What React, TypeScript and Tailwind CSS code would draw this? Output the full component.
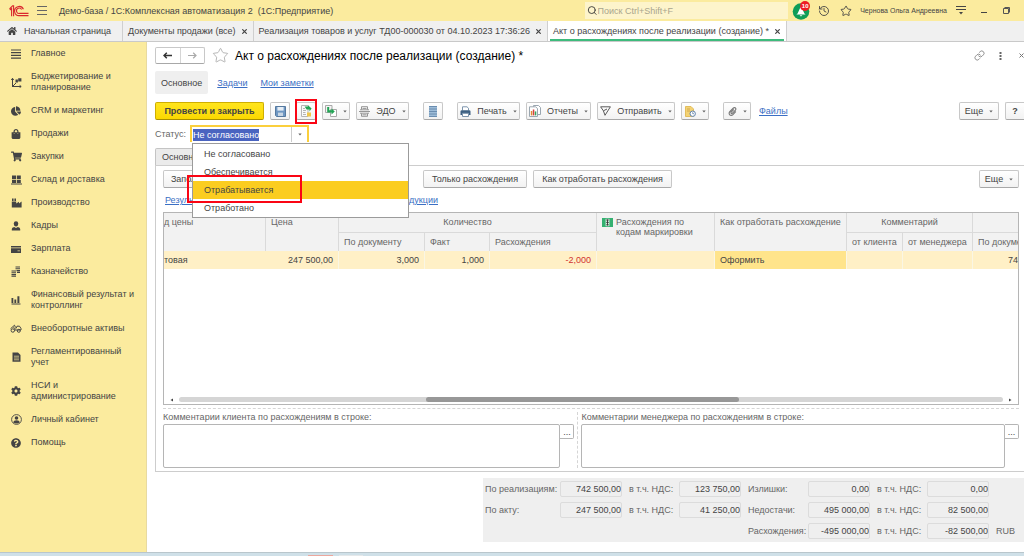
import { useEffect, useRef, type ReactNode } from "react";
import clsx from "clsx";
import {
  FaChartPie,
  FaCog,
  FaHome,
  FaPaperclip,
  FaQuestionCircle,
  FaShoppingBag,
  FaShoppingCart,
} from "react-icons/fa";
import { History, Link, Search, Star } from "lucide-react";

const tabs = [
  { name: "Документы продажи (все)", active: false },
  { name: "Реализация товаров и услуг ТД00-000030 от 04.10.2023 17:36:26", active: false },
  { name: "Акт о расхождениях после реализации (создание) *", active: true },
];

const sections: { name: string; icon: ReactNode }[] = [
  { name: "Главное", icon: <LinesIcon /> },
  { name: "Бюджетирование и планирование", icon: <PlanIcon /> },
  { name: "CRM и маркетинг", icon: <FaChartPie size={10} /> },
  { name: "Продажи", icon: <FaShoppingBag size={10} /> },
  { name: "Закупки", icon: <FaShoppingCart size={11} /> },
  { name: "Склад и доставка", icon: <StoreIcon /> },
  { name: "Производство", icon: <FactoryIcon /> },
  { name: "Кадры", icon: <PersonIcon /> },
  { name: "Зарплата", icon: <CardIcon /> },
  { name: "Казначейство", icon: <CoinsIcon /> },
  { name: "Финансовый результат и контроллинг", icon: <BarsIcon /> },
  { name: "Внеоборотные активы", icon: <TruckIcon /> },
  { name: "Регламентированный учет", icon: <ReportIcon /> },
  { name: "НСИ и администрирование", icon: <FaCog size={10} /> },
  { name: "Личный кабинет", icon: <AccountIcon /> },
  { name: "Помощь", icon: <FaQuestionCircle size={10} /> },
];

const statuses = ["Не согласовано", "Обеспечивается", "Отрабатывается", "Отработано"];

const totals = [
  [
    { label: "По реализациям:", value: "742 500,00" },
    { label: "в т.ч. НДС:", value: "123 750,00" },
    { label: "Излишки:", value: "0,00" },
    { label: "в т.ч. НДС:", value: "0,00" },
  ],
  [
    { label: "По акту:", value: "247 500,00" },
    { label: "в т.ч. НДС:", value: "41 250,00" },
    { label: "Недостачи:", value: "495 000,00" },
    { label: "в т.ч. НДС:", value: "82 500,00" },
  ],
  [
    null,
    null,
    { label: "Расхождения:", value: "-495 000,00" },
    { label: "в т.ч. НДС:", value: "-82 500,00" },
  ],
];

/* ---------- icons ---------- */

function Logo() {
  return (
    <svg width="20" height="12" viewBox="0 0 20 12" fill="none" stroke="#d9272e" strokeWidth="1.1">
      <path d="M0.5 3.8 L3.6 0.8 H4.6 V11.2 M2.6 11.2 V3.6 L0.8 5" />
      <path d="M14.4 4.2 A4.6 4.6 0 1 0 10.8 10.6 H19.5" />
      <path d="M12.6 4.6 A2.7 2.7 0 1 0 10.8 8.4 H19.5" />
    </svg>
  );
}

function LinesIcon() {
  return (
    <svg width="10" height="10" viewBox="0 0 10 10" stroke="currentColor" strokeWidth="1.2">
      <path d="M0 1H10M0 3.7H10M0 6.4H10M0 9.1H10" />
    </svg>
  );
}

function PlanIcon() {
  return (
    <svg width="11" height="11" viewBox="0 0 11 11" fill="none" stroke="currentColor">
      <path d="M1.5 10V1.5M0.3 3L1.5 1.3L2.7 3M1.5 9.5H10M8.6 8.3L10.2 9.5L8.6 10.7M1.5 9.5L5 6" />
      <path d="M4.5 2.6h2.4v3H4.5zM7.2 1.2h3.2v3.4H7.2z" fill="currentColor" stroke="none" />
    </svg>
  );
}

function StoreIcon() {
  return (
    <svg width="11" height="10" viewBox="0 0 11 10" fill="currentColor">
      <path d="M1 0.5h4v3.8H1zM5.8 0.5h4v3.8h-4zM1 5h4v3H1zM5.8 5h4v3h-4zM0 8.4h11v1.2H0z" />
    </svg>
  );
}

function FactoryIcon() {
  return (
    <svg width="11" height="10" viewBox="0 0 11 10" fill="currentColor">
      <path d="M1 0.5h1.6V3H1zM3.4 0.5H5V3H3.4zM0.8 3.6h4.4v2L8 3.8v1.6l2.6-1.8V9.6H0.8z" />
    </svg>
  );
}

function PersonIcon() {
  return (
    <svg width="10" height="10" viewBox="0 0 10 10" fill="currentColor">
      <path d="M2.8 2.4Q2.8 0.3 5 0.3T7.2 2.4Q7.2 5.4 5 5.4T2.8 2.4Z" />
      <path d="M0.8 9.6V8Q0.8 6.4 3.2 6L5 7L6.8 6Q9.2 6.4 9.2 8V9.6Z" />
    </svg>
  );
}

function CardIcon() {
  return (
    <svg width="10" height="8" viewBox="0 0 10 8" fill="currentColor">
      <path d="M0 1h10v1.4H0zM0 3.2h10V8H0z" />
      <path d="M6.5 5.8h2.4" stroke="#fbeb9e" strokeWidth="0.7" />
    </svg>
  );
}

function CoinsIcon() {
  return (
    <svg width="10" height="11" viewBox="0 0 10 11" fill="none" stroke="currentColor" strokeWidth="1.1">
      <path d="M4.5 1h4.5M4.5 2.8h4.5M5.5 4.6h3.5M6 6.4h3M0.5 5h4.5M0.5 6.8h4.5M0.5 8.6h4.5M0.5 10.3h4.5" />
    </svg>
  );
}

function BarsIcon() {
  return (
    <svg width="10" height="10" viewBox="0 0 10 10" fill="currentColor">
      <path d="M0.5 3h1.8v5H0.5zM3.4 4.5h1.8V8H3.4zM6.4 1.2h2V8h-2zM0.5 8.6h9v1h-9z" />
    </svg>
  );
}

function TruckIcon() {
  return (
    <svg width="12" height="9" viewBox="0 0 12 9" fill="none" stroke="currentColor">
      <path d="M0.5 4.8L4.5 1.2L5.5 3.5M6 4.5L7 2.2H9.5L11 4.5V6H4M3.4 3.4L5.6 5" />
      <circle cx="2.8" cy="6.5" r="1.7" />
      <circle cx="8.8" cy="6.8" r="1.5" />
    </svg>
  );
}

function ReportIcon() {
  return (
    <svg width="9" height="10" viewBox="0 0 9 10">
      <path d="M0.5 0.5H6L8.5 3V9.8H0.5Z" fill="currentColor" />
      <path d="M2 4.2H7M2 6H7M2 7.8H7" stroke="#fbeb9e" strokeWidth="0.7" />
    </svg>
  );
}

function AccountIcon() {
  return (
    <svg width="11" height="11" viewBox="0 0 11 11">
      <circle cx="5.5" cy="5.5" r="4.9" fill="none" stroke="currentColor" strokeWidth="0.9" />
      <circle cx="5.5" cy="4" r="1.8" fill="currentColor" />
      <path d="M2.3 8.6Q2.6 6.2 5.5 6.2T8.7 8.6Q5.5 10.6 2.3 8.6Z" fill="currentColor" />
    </svg>
  );
}

function BellIcon() {
  return (
    <svg width="18" height="18" viewBox="0 0 18 18">
      <circle cx="9" cy="9.5" r="8.3" fill="#0f9d58" />
      <path d="M9 4L12.4 11.4L13.6 12.6H4.4L5.6 11.4ZM7.6 13.3H10.4L9 14.6Z" fill="#fff" />
    </svg>
  );
}

function SaveIcon() {
  return (
    <svg width="11" height="11" viewBox="0 0 11 11">
      <path d="M0.5 0.5H10.5V10.5H1.5L0.5 9.5Z" fill="#6f97c2" stroke="#55799f" />
      <path d="M2.4 1h6.2v3.6H2.4z" fill="#e6eef6" />
      <path d="M3 6.6h5V10H3z" fill="#c8d6e4" />
    </svg>
  );
}

function PostIcon() {
  return (
    <svg width="12" height="12" viewBox="0 0 12 12" fill="none">
      <path d="M1.5 0.5H8V11.5H1.5Z" fill="#fafafa" stroke="#b5b5b5" />
      <path d="M3 3.5H5M3 5.5H6M3 7.5H5.5M3 9.5H6" stroke="#b5b5b5" />
      <path d="M4.6 1.6H8V0.3L11.6 3.6L9.5 6.6V4.6H6.6Z" fill="#23a455" />
      <path d="M7 7.5h4v4H7z" fill="#efc64b" />
    </svg>
  );
}

function CreateFromIcon() {
  return (
    <svg width="12" height="12" viewBox="0 0 12 12">
      <path d="M0.5 0.5H7V7.5H0.5Z" fill="#f4f4f4" stroke="#a8a8a8" />
      <path d="M5.5 4.5H11.5V11.5H5.5Z" fill="#fff" stroke="#a8a8a8" />
      <path d="M2.2 2H4.2V5.2H6.5V3.4L9.8 6.4L6.5 9.4V7.4H2.2Z" fill="#23a455" />
    </svg>
  );
}

function EdoIcon() {
  return (
    <svg width="11" height="11" viewBox="0 0 11 11" fill="none" stroke="#8a8a8a">
      <path
        d="M2.5 3.5V0.7H8.5V3.5M2.5 7.5V10.3H8.5V7.5M0 5.5H11M3.5 2.4H7.5M1 3.8H10M1 7.2H10M3.5 8.8H7.5"
        strokeWidth="0.9"
      />
    </svg>
  );
}

function RegisterIcon() {
  return (
    <svg width="8" height="11" viewBox="0 0 8 11">
      <path d="M0 0H8V11H0Z" fill="#9dbcd8" />
      <path d="M0 0.5H8M0 3H8M0 5.5H8M0 8H8M0 10.5H8" stroke="#6488ab" strokeWidth="0.9" />
    </svg>
  );
}

function PrinterIcon() {
  return (
    <svg width="11" height="11" viewBox="0 0 11 11">
      <path d="M2.5 4.5V0.8H7L8.5 2.2V4.5" fill="#fff" stroke="#7d95ad" />
      <path d="M0.5 5.5Q0.5 4.2 1.8 4.2H9.2Q10.5 4.2 10.5 5.5V9H0.5Z" fill="#3e6183" />
      <path d="M2.5 7.3H8.5V10.5H2.5Z" fill="#fff" stroke="#7d95ad" />
    </svg>
  );
}

function ReportsIcon() {
  return (
    <svg width="12" height="12" viewBox="0 0 12 12">
      <path d="M4.5 0.5H9.5L11.5 2.5V9.5H4.5Z" fill="#fff" stroke="#9aa6b0" />
      <path d="M0.5 1.8H6.5L8.5 3.5V11.5H0.5Z" fill="#fff" stroke="#9aa6b0" />
      <path d="M1.8 6h1.5v4.4H1.8z" fill="#e08a35" />
      <path d="M3.8 4.5h1.5v5.9H3.8z" fill="#d8403f" />
      <path d="M5.8 6.4h1.5v4H5.8z" fill="#35a35d" />
    </svg>
  );
}

function SendIcon() {
  return (
    <svg width="11" height="10" viewBox="0 0 11 10" fill="none" stroke="#5a5a5a" strokeLinejoin="round">
      <path d="M0.6 0.8H10.4L5 9.3L3.4 4.8ZM3.4 4.8L7 3" />
    </svg>
  );
}

function ScheduleIcon() {
  return (
    <svg width="11" height="11" viewBox="0 0 11 11">
      <path d="M0.5 0.5H6L8.5 3V10.5H0.5Z" fill="#f3d274" stroke="#e2bd5c" />
      <path d="M2 3H5M2 5H5" stroke="#c9a044" strokeWidth="0.8" />
      <circle cx="7.7" cy="7.7" r="2.7" fill="#fff" stroke="#5c80ab" />
      <path d="M7.7 6.2V7.7H9.1" fill="none" stroke="#5c80ab" strokeWidth="0.8" />
    </svg>
  );
}

function MarkingIcon() {
  return (
    <svg className="mt-px shrink-0" width="11" height="9" viewBox="0 0 11 9">
      <path d="M0 0H11V9H0Z" fill="#35b071" />
      <path d="M3.6 0.8H7.4V8.2H3.6Z" fill="#d9f0e3" />
      <path d="M4.2 2H6.8M4.2 4.4H6.8M4.2 6.8H6.8M5.5 1.5V7.5" stroke="#333" strokeWidth="0.9" />
    </svg>
  );
}

function Caret() {
  return (
    <svg className="shrink-0" width="4" height="3" viewBox="0 0 4 3" fill="#666">
      <path d="M0.3 0.6H3.7L2 2.6Z" />
    </svg>
  );
}

/* ---------- building blocks ---------- */

type ToolButtonProps = {
  children?: ReactNode;
  icon?: ReactNode;
  label?: string;
  caret?: boolean;
  className?: string;
};

function ToolButton({ children, icon, label, caret, className }: ToolButtonProps) {
  return (
    <button
      type="button"
      aria-label={label}
      className={clsx(
        "flex h-[18px] shrink-0 items-center justify-center gap-1.5 rounded-xs border border-[#c8c8c8] border-b-[#a8a8a8] bg-linear-to-b from-white to-[#f2f2f2] whitespace-nowrap",
        className
      )}
    >
      {icon}
      {children}
      {caret && <Caret />}
    </button>
  );
}

function Header() {
  return (
    <header className="flex h-[21px] items-center bg-[#fbeb9e] pl-[9px]">
      <Logo />
      <button type="button" aria-label="Меню" className="ml-2">
        <svg width="10" height="9" viewBox="0 0 10 9" stroke="#666">
          <path d="M0 0.5H10M0 4.5H10M0 8.5H10" />
        </svg>
      </button>
      <div className="ml-3 flex-1 whitespace-pre">
        Демо-база / 1С:Комплексная автоматизация 2{"  "}(1С:Предприятие)
      </div>
      <label className="flex h-[17px] w-[203px] items-center bg-[#fdf4cb] pl-0.5">
        <Search size={11} color="#333" />
        <input
          type="search"
          aria-label="Поиск"
          placeholder="Поиск Ctrl+Shift+F"
          className="w-full bg-transparent outline-none placeholder:text-[#a9a48d]"
        />
      </label>
      <button type="button" aria-label="Уведомления" className="relative ml-1">
        <BellIcon />
        <span className="absolute -top-px right-0 flex size-[10px] items-center justify-center rounded-full bg-[#ed1c24] text-[6px] font-bold text-white">
          10
        </span>
      </button>
      <button type="button" aria-label="История" className="ml-2">
        <History size={12} strokeWidth={1.8} />
      </button>
      <button type="button" aria-label="Избранное" className="ml-2.5">
        <Star size={12} strokeWidth={1.8} />
      </button>
      <span className="ml-2 text-[7px] whitespace-nowrap">Чернова Ольга Андреевна</span>
      <button type="button" aria-label="Настройки" className="ml-[9px]">
        <svg width="10" height="9" viewBox="0 0 10 9" fill="none" stroke="#444">
          <path d="M0 0.5H10M0 3.5H10" />
          <path d="M3 6H7L5 8.5Z" fill="#444" stroke="none" />
        </svg>
      </button>
      <button type="button" aria-label="Свернуть" className="ml-[15px]">
        <svg width="6" height="7" viewBox="0 0 6 7" stroke="#444">
          <path d="M0 5.5H6" />
        </svg>
      </button>
      <button type="button" aria-label="Восстановить" className="mr-[14px] ml-4">
        <svg width="7" height="7" viewBox="0 0 7 7" fill="none" stroke="#555">
          <path d="M0.5 1.5H5.5V6.5H0.5ZM1.5 0.5H6.5V5.5" />
        </svg>
      </button>
    </header>
  );
}

function TabBar() {
  return (
    <nav className="flex h-[21px] border-b border-[#c9c9c9] bg-[#f0f0f0]">
      <button type="button" className="flex w-[122px] items-center gap-[7px] pl-[7px]">
        <FaHome size={10} />
        Начальная страница
      </button>
      {tabs.map((tab) => (
        <div
          key={tab.name}
          className={clsx(
            "flex items-center border-l border-[#cfcfcf] pr-1.5 pl-[5px] whitespace-nowrap",
            tab.active &&
              "border-r bg-white bg-[linear-gradient(#3dbb7c,#3dbb7c)] bg-[length:calc(100%-4px)_2px] bg-bottom bg-no-repeat"
          )}
        >
          <button type="button">{tab.name}</button>
          <button type="button" aria-label="Закрыть" className="ml-1.5">
            <svg width="5" height="5" viewBox="0 0 5 5" stroke="#444" strokeWidth="1.2">
              <path d="M0.3 0.3L4.7 4.7M4.7 0.3L0.3 4.7" />
            </svg>
          </button>
        </div>
      ))}
    </nav>
  );
}

function Sidebar() {
  return (
    <aside className="w-[147px] shrink-0 border-r border-[#e8daa0] bg-[#fbeb9e]">
      <ul>
        {sections.map((section) => (
          <li key={section.name}>
            <a href="#" className="flex items-center py-1.5 pr-2 pl-[10px] leading-[11px]">
              <span className="flex w-[21px] shrink-0">
                <span className="flex w-3 justify-center">{section.icon}</span>
              </span>
              {section.name}
            </a>
          </li>
        ))}
      </ul>
    </aside>
  );
}

function TitleRow() {
  return (
    <div className="flex h-[17px] items-center">
      <div className="flex h-[17px] w-[50px] rounded-xs border border-[#c8c8c8] border-b-[#a8a8a8] bg-white">
        <button
          type="button"
          aria-label="Назад"
          className="flex flex-1 items-center justify-center border-r border-[#d5d5d5]"
        >
          <svg width="9" height="7" viewBox="0 0 9 7" fill="none" stroke="#333" strokeWidth="1.5">
            <path d="M9 3.5H1M3.8 0.8L1 3.5L3.8 6.2" />
          </svg>
        </button>
        <button type="button" aria-label="Вперед" className="flex flex-1 items-center justify-center">
          <svg width="9" height="7" viewBox="0 0 9 7" fill="none" stroke="#aaa" strokeWidth="1.2">
            <path d="M0 3.5H8M5.2 0.8L8 3.5L5.2 6.2" />
          </svg>
        </button>
      </div>
      <button type="button" aria-label="В избранное" className="ml-[7px]">
        <Star size={17} strokeWidth={1} color="#999" />
      </button>
      <h1 className="ml-1.5 text-[12px] whitespace-nowrap text-black">
        Акт о расхождениях после реализации (создание) *
      </h1>
      <button type="button" aria-label="Ссылка" className="ml-auto">
        <Link size={11} strokeWidth={2} color="#888" />
      </button>
      <button type="button" aria-label="Действия" className="ml-3.5">
        <svg width="3" height="8" viewBox="0 0 3 8" fill="#666">
          <path d="M0.5 0h2v2h-2zM0.5 3h2v2h-2zM0.5 6h2v2h-2z" />
        </svg>
      </button>
      <button type="button" aria-label="Закрыть" className="ml-[17px]">
        <svg width="5" height="5" viewBox="0 0 5 5" stroke="#777">
          <path d="M0.5 0.5L4.5 4.5M4.5 0.5L0.5 4.5" />
        </svg>
      </button>
    </div>
  );
}

function Toolbar() {
  return (
    <div className="mt-2 flex items-center gap-1.5">
      <button
        type="button"
        className="h-[18px] w-[109px] shrink-0 rounded-xs border border-[#cfae00] border-b-[#a98f00] bg-linear-to-b from-[#ffe51c] to-[#fbd800] font-bold whitespace-nowrap"
      >
        Провести и закрыть
      </button>
      <ToolButton label="Записать" icon={<SaveIcon />} className="w-5" />
      <div className="relative">
        <ToolButton label="Провести" icon={<PostIcon />} className="w-5" />
        <div className="pointer-events-none absolute -inset-x-px -top-[3px] -bottom-[4px] border-2 border-[#fa0514]" />
      </div>
      <ToolButton label="Создать на основании" icon={<CreateFromIcon />} caret className="w-[28px]" />
      <ToolButton icon={<EdoIcon />} caret className="w-[53px]">
        ЭДО
      </ToolButton>
      <ToolButton label="Движения" icon={<RegisterIcon />} className="ml-2 w-5" />
      <ToolButton icon={<PrinterIcon />} caret className="ml-2 w-[63px]">
        Печать
      </ToolButton>
      <ToolButton icon={<ReportsIcon />} caret className="w-[65px]">
        Отчеты
      </ToolButton>
      <ToolButton icon={<SendIcon />} caret className="w-[78px]">
        Отправить
      </ToolButton>
      <ToolButton label="Напоминания" icon={<ScheduleIcon />} caret className="w-[28px]" />
      <ToolButton label="Вложения" icon={<FaPaperclip size={9} color="#777" />} caret className="ml-2 w-[28px]" />
      <a href="#" className="ml-0.5 text-[#3b6fc4] underline">
        Файлы
      </a>
      <ToolButton caret className="ml-auto w-10">
        Еще
      </ToolButton>
      <ToolButton className="w-[19px] rounded-r-none border-r-0 font-bold">?</ToolButton>
    </div>
  );
}

function StatusField() {
  const inputRef = useRef<HTMLInputElement>(null);

  useEffect(() => {
    inputRef.current?.focus();
    inputRef.current?.select();
  }, []);

  return (
    <div className="mt-[5px] flex items-center">
      <label htmlFor="status" className="w-[35px] text-[#666]">
        Статус:
      </label>
      <div className="relative flex h-[17px] w-[119px] border-2 border-b-0 border-[#fbcf3c] bg-white">
        <input
          id="status"
          ref={inputRef}
          role="combobox"
          aria-expanded="true"
          aria-controls="status-list"
          defaultValue={statuses[0]}
          className="w-full min-w-0 pl-px outline-none selection:bg-[#4a64c0] selection:text-white"
        />
        <button
          type="button"
          aria-label="Выбрать статус"
          className="flex w-4 shrink-0 items-center justify-center border-l border-[#ccc]"
        >
          <Caret />
        </button>
        <ul
          id="status-list"
          role="listbox"
          className="absolute top-4 left-0 z-10 w-[217px] border border-[#9b9b9b] bg-white pt-px"
        >
          {statuses.map((status) => {
            const selected = status === "Отрабатывается";
            return (
              <li
                key={status}
                role="option"
                aria-selected={selected}
                className={clsx("relative flex h-[18px] items-center pl-[11px]", selected && "bg-[#fbcd20]")}
              >
                {status}
                {selected && (
                  <span className="pointer-events-none absolute -top-[6px] -left-[6px] h-[28px] w-[115px] border-2 border-[#fa0514]" />
                )}
              </li>
            );
          })}
        </ul>
      </div>
    </div>
  );
}

function ItemsTable() {
  const head = "border-r border-[#dadada] px-[5px] pt-1 align-top font-normal text-[#666] leading-[10px]";
  const subHead = "border-t border-r border-[#dadada] px-[5px] text-left font-normal text-[#666]";
  const cell = "border-r border-[#faf6e4] px-[5px] text-right";

  return (
    <div className="mt-1.5 flex h-[193px] flex-col overflow-hidden border border-[#b5b5b5]">
      <table className="w-full table-fixed border-separate border-spacing-0 whitespace-nowrap">
        <colgroup>
          <col className="w-[102px]" />
          <col className="w-[73px]" />
          <col className="w-[86px]" />
          <col className="w-[65px]" />
          <col className="w-[107px]" />
          <col className="w-[118px]" />
          <col className="w-[132px]" />
          <col className="w-[56px]" />
          <col className="w-[70px]" />
          <col />
        </colgroup>
        <thead className="bg-[#f2f2f2]">
          <tr className="h-[19px]">
            <th rowSpan={2} className="border-r border-[#dadada] pt-1 text-left align-top leading-[10px] font-normal text-[#666]">
              д цены
            </th>
            <th rowSpan={2} className={clsx(head, "text-left")}>Цена</th>
            <th colSpan={3} className={clsx(head, "text-center")}>Количество</th>
            <th rowSpan={2} className={clsx(head, "text-left")}>
              <span className="flex gap-[3px] whitespace-normal">
                <MarkingIcon />
                Расхождения по кодам маркировки
              </span>
            </th>
            <th rowSpan={2} className={clsx(head, "text-left")}>Как отработать расхождение</th>
            <th colSpan={2} className={clsx(head, "text-center")}>Комментарий</th>
            <th className="font-normal" />
          </tr>
          <tr className="h-[19px]">
            <th className={subHead}>По документу</th>
            <th className={subHead}>Факт</th>
            <th className={subHead}>Расхождения</th>
            <th className={subHead}>от клиента</th>
            <th className={subHead}>от менеджера</th>
            <th className="overflow-hidden border-t border-[#dadada] pl-[5px] text-left font-normal text-[#666]">
              По документу
            </th>
          </tr>
        </thead>
        <tbody>
          <tr className="h-[18px] bg-[#fff0c6]">
            <td>товая</td>
            <td className={cell}>247 500,00</td>
            <td className={cell}>3,000</td>
            <td className={cell}>1,000</td>
            <td className={clsx(cell, "text-[#d03030]")}>-2,000</td>
            <td className={cell} />
            <td className="border-r border-[#faf6e4] bg-[#ffe48b] px-[5px]">Оформить</td>
            <td className={cell} />
            <td className={cell} />
            <td className="text-right">74</td>
          </tr>
        </tbody>
      </table>
      <div className="mt-auto mb-0.5 flex h-[5px] items-center gap-1.5 px-1.5">
        <svg width="3" height="4" viewBox="0 0 3 4" fill="#444">
          <path d="M3 0.5V3.5L0.5 2Z" />
        </svg>
        <div className="flex h-[5px] flex-1 rounded-full bg-[#d5d5d5]">
          <div className="ml-[30%] w-[38%] rounded-full bg-[#989898]" />
        </div>
        <svg width="3" height="4" viewBox="0 0 3 4" fill="#444">
          <path d="M0 0.5V3.5L2.5 2Z" />
        </svg>
      </div>
    </div>
  );
}

function CommentField({ id, label }: { id: string; label: string }) {
  return (
    <div>
      <label htmlFor={id} className="block h-3 leading-[10px] text-[#666]">
        {label}
      </label>
      <div className="flex items-start">
        <textarea id={id} className="h-11 min-w-0 flex-1 resize-none rounded-xs border border-[#b5b5b5] outline-none" />
        <button
          type="button"
          aria-label="Открыть"
          className="h-[15px] w-[14px] rounded-r-xs border border-l-0 border-[#b5b5b5]"
        >
          ...
        </button>
      </div>
    </div>
  );
}

function Totals() {
  return (
    <div className="mt-1.5 mb-[10px] ml-auto grid w-[541px] grid-cols-[75px_62px_57px_62px_67px_62px_57px_62px_1fr] items-center gap-y-[5px] bg-[#efefef] py-[3px] pl-0.5 whitespace-nowrap text-[#666]">
      {totals.map((row, r) => [
        ...row.map((field, c) => {
          const id = `total-${r}-${c}`;
          if (!field) return <span key={id} className="col-span-2" />;
          return (
            <div key={id} className="contents">
              <label htmlFor={id} className={c > 0 ? "pl-[7px]" : undefined}>
                {field.label}
              </label>
              <input
                id={id}
                readOnly
                value={field.value}
                className="h-4 w-full rounded-xs border border-[#dcdcdc] bg-transparent text-right text-[#444] outline-none"
              />
            </div>
          );
        }),
        <span key={`currency-${r}`} className="pl-[7px]">
          {r === 2 ? "RUB" : ""}
        </span>,
      ])}
    </div>
  );
}

export default function App() {
  return (
    <div className="overflow-hidden bg-white font-['Liberation_Sans',Arial,sans-serif] text-[9px] leading-[12px] text-[#444]">
      <Header />
      <TabBar />
      <div className="flex">
        <Sidebar />
        <main className="min-w-0 flex-1 pt-[5px] pl-2">
          <TitleRow />
          <nav className="mt-[7px] flex h-[23px] items-center gap-[13px] text-[#3b6fc4]">
            <a href="#" className="flex h-full items-center rounded-xs bg-[#efefef] px-1.5 text-[#444]">
              Основное
            </a>
            <a href="#" className="-ml-1 underline">
              Задачи
            </a>
            <a href="#" className="underline">
              Мои заметки
            </a>
          </nav>
          <Toolbar />
          <StatusField />
          <div className="mt-1.5 flex">
            <button
              type="button"
              className="h-[17px] rounded-t-xs border border-b-0 border-[#c4c4c4] bg-[#ebebeb] px-1.5"
            >
              Основное
            </button>
          </div>
          <section className="border-y border-l border-[#cdcdcd] pt-1 pr-[5px] pb-[3px] pl-[7px]">
            <div className="flex">
              <ToolButton className="w-[60px]">Заполнить</ToolButton>
              <ToolButton className="ml-[200px] w-[104px]">Только расхождения</ToolButton>
              <ToolButton className="ml-1.5 w-[139px]">Как отработать расхождения</ToolButton>
              <ToolButton caret className="ml-auto w-10">
                Еще
              </ToolButton>
            </div>
            <a href="#" className="mt-1.5 flex w-[275px] justify-between pl-0.5 text-[#3b6fc4] underline">
              <span>Результат</span>
              <span>продукции</span>
            </a>
            <ItemsTable />
            <div className="mt-[3px] grid grid-cols-[411fr_441fr] gap-[3px] border-t border-dashed border-[#d5d5d5] pt-[3px]">
              <CommentField id="client-comment" label="Комментарии клиента по расхождениям в строке:" />
              <div className="border-l border-dashed border-[#d5d5d5] pl-[3px]">
                <CommentField id="manager-comment" label="Комментарии менеджера по расхождениям в строке:" />
              </div>
            </div>
          </section>
          <Totals />
        </main>
      </div>
      <footer className="flex h-1 items-end border-t border-[#b9c6cc] bg-[#cfe0e8] pl-[308px]">
        <span className="h-px w-[25px] bg-[#eba79d]" />
        <span className="ml-1.5 h-px w-6 bg-[#e4e8ea]" />
      </footer>
    </div>
  );
}
